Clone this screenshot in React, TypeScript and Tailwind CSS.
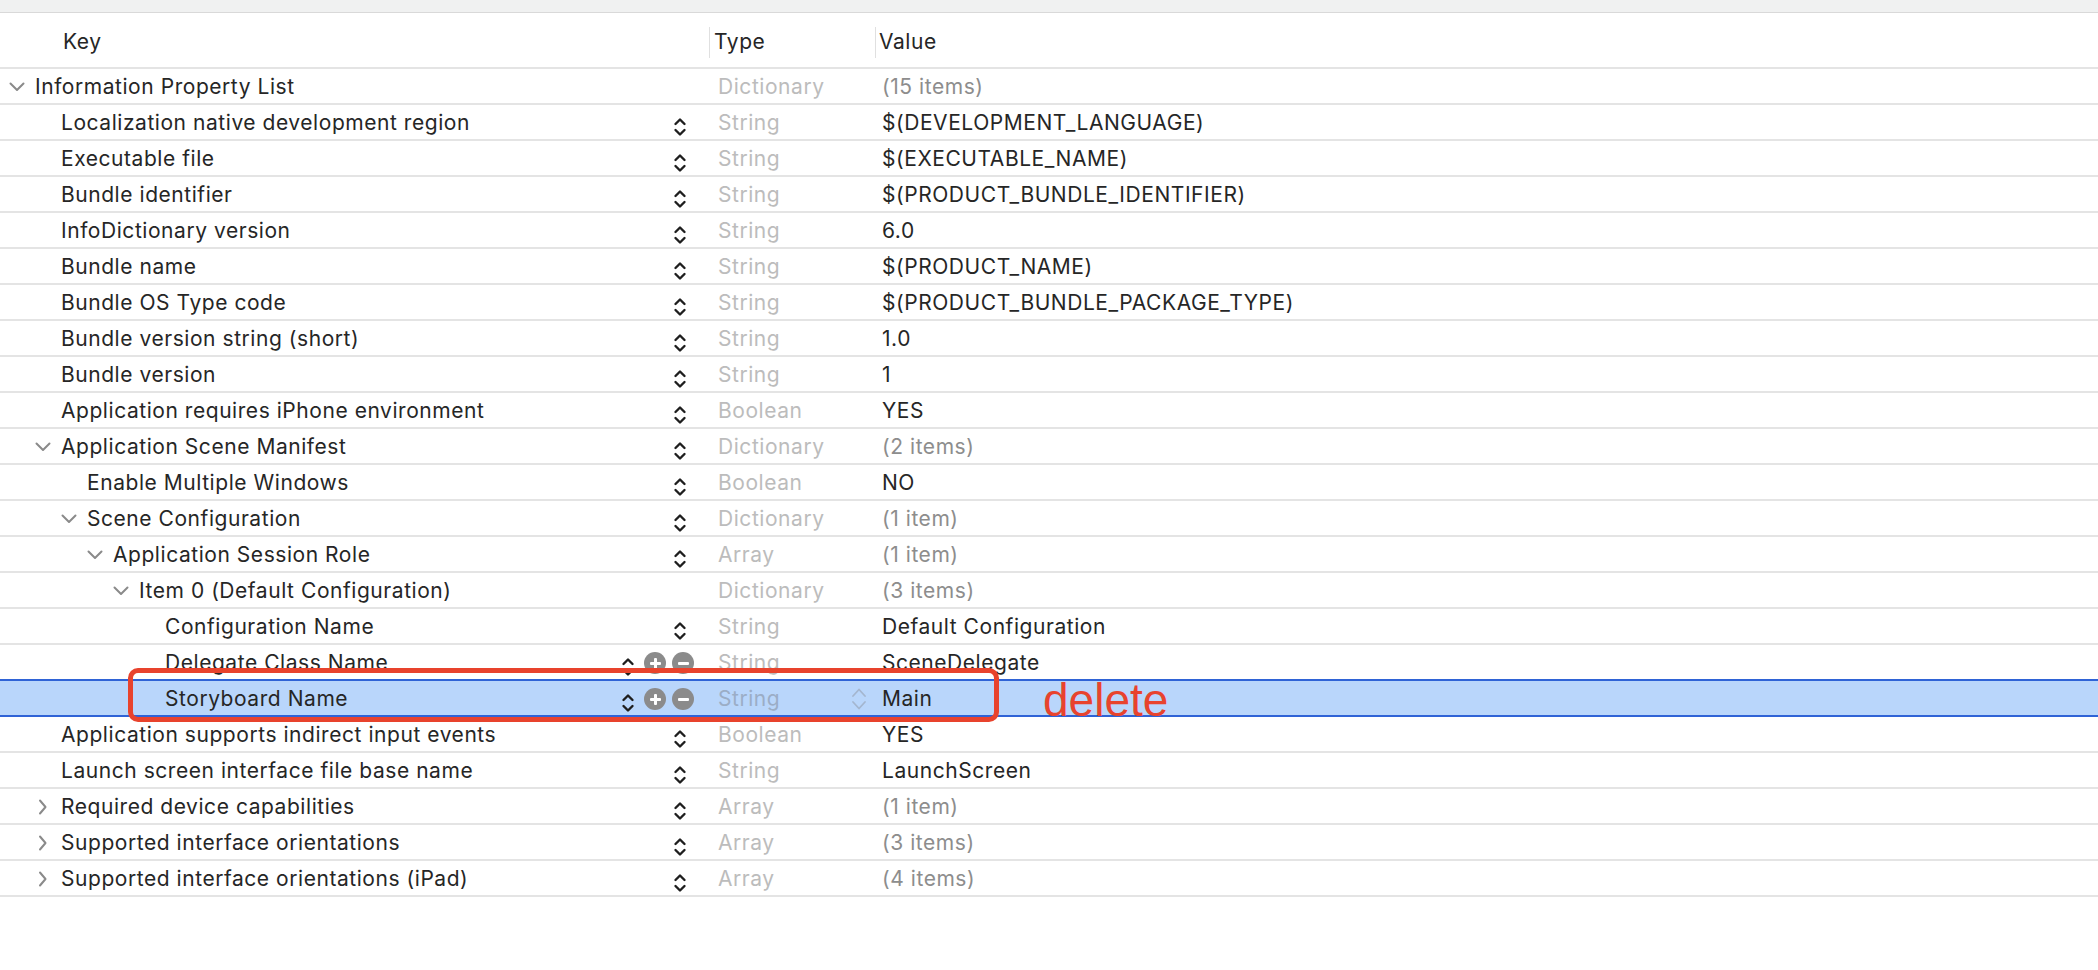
import React from "react";

type Row = {
  level: number;
  disc?: "down" | "right";
  k: string;
  type: string;
  value: string;
  dim?: boolean;
  stepper?: boolean;
  pm?: boolean;
  selected?: boolean;
  nextSelected?: boolean;
};

const rows: Row[] = [
  { level: 0, disc: "down", k: "Information Property List", type: "Dictionary", value: "(15 items)", dim: true },
  { level: 1, k: "Localization native development region", type: "String", value: "$(DEVELOPMENT_LANGUAGE)", stepper: true },
  { level: 1, k: "Executable file", type: "String", value: "$(EXECUTABLE_NAME)", stepper: true },
  { level: 1, k: "Bundle identifier", type: "String", value: "$(PRODUCT_BUNDLE_IDENTIFIER)", stepper: true },
  { level: 1, k: "InfoDictionary version", type: "String", value: "6.0", stepper: true },
  { level: 1, k: "Bundle name", type: "String", value: "$(PRODUCT_NAME)", stepper: true },
  { level: 1, k: "Bundle OS Type code", type: "String", value: "$(PRODUCT_BUNDLE_PACKAGE_TYPE)", stepper: true },
  { level: 1, k: "Bundle version string (short)", type: "String", value: "1.0", stepper: true },
  { level: 1, k: "Bundle version", type: "String", value: "1", stepper: true },
  { level: 1, k: "Application requires iPhone environment", type: "Boolean", value: "YES", stepper: true },
  { level: 1, disc: "down", k: "Application Scene Manifest", type: "Dictionary", value: "(2 items)", dim: true, stepper: true },
  { level: 2, k: "Enable Multiple Windows", type: "Boolean", value: "NO", stepper: true },
  { level: 2, disc: "down", k: "Scene Configuration", type: "Dictionary", value: "(1 item)", dim: true, stepper: true },
  { level: 3, disc: "down", k: "Application Session Role", type: "Array", value: "(1 item)", dim: true, stepper: true },
  { level: 4, disc: "down", k: "Item 0 (Default Configuration)", type: "Dictionary", value: "(3 items)", dim: true },
  { level: 5, k: "Configuration Name", type: "String", value: "Default Configuration", stepper: true },
  { level: 5, k: "Delegate Class Name", type: "String", value: "SceneDelegate", stepper: true, pm: true, nextSelected: true },
  { level: 5, k: "Storyboard Name", type: "String", value: "Main", stepper: true, pm: true, selected: true },
  { level: 1, k: "Application supports indirect input events", type: "Boolean", value: "YES", stepper: true },
  { level: 1, k: "Launch screen interface file base name", type: "String", value: "LaunchScreen", stepper: true },
  { level: 1, disc: "right", k: "Required device capabilities", type: "Array", value: "(1 item)", dim: true, stepper: true },
  { level: 1, disc: "right", k: "Supported interface orientations", type: "Array", value: "(3 items)", dim: true, stepper: true },
  { level: 1, disc: "right", k: "Supported interface orientations (iPad)", type: "Array", value: "(4 items)", dim: true, stepper: true },
];

const indent = ["pl-[9px]", "pl-[35px]", "pl-[61px]", "pl-[87px]", "pl-[113px]", "pl-[139px]"];

function Stepper() {
  return (
    <svg width="14" height="22" viewBox="0 0 14 22" className="translate-y-[4px]">
      <path d="M2.5 8 L7 3.5 L11.5 8" fill="none" stroke="#1e1e1e" strokeWidth="2.4" strokeLinecap="round" strokeLinejoin="round" />
      <path d="M2.5 14 L7 18.5 L11.5 14" fill="none" stroke="#1e1e1e" strokeWidth="2.4" strokeLinecap="round" strokeLinejoin="round" />
    </svg>
  );
}

function LightStepper() {
  return (
    <svg width="16" height="26" viewBox="0 0 16 26">
      <path d="M2 10 L8 3.5 L14 10" fill="none" stroke="#a4b6cf" strokeWidth="1.8" strokeLinecap="round" strokeLinejoin="round" />
      <path d="M2 16 L8 22.5 L14 16" fill="none" stroke="#a4b6cf" strokeWidth="1.8" strokeLinecap="round" strokeLinejoin="round" />
    </svg>
  );
}

function CircleBtn({ plus }: { plus?: boolean }) {
  return (
    <div className="relative flex h-[22px] w-[22px] items-center justify-center rounded-full bg-[#8b8b8b]">
      <div className="h-[3px] w-[11px] rounded-[1px] bg-white" />
      {plus && <div className="absolute h-[11px] w-[3px] rounded-[1px] bg-white" />}
    </div>
  );
}

function Disclosure({ dir }: { dir?: "down" | "right" }) {
  return (
    <div className="flex w-[26px] shrink-0 items-center">
      {dir === "down" && (
        <svg width="16" height="10" viewBox="0 0 16 10">
          <path d="M1.5 1.5 L8 8 L14.5 1.5" fill="none" stroke="#8a8a8a" strokeWidth="2" strokeLinecap="round" strokeLinejoin="round" />
        </svg>
      )}
      {dir === "right" && (
        <svg width="10" height="16" viewBox="0 0 10 16" className="ml-[3px]">
          <path d="M2 1.5 L7.5 8 L2 14.5" fill="none" stroke="#8a8a8a" strokeWidth="2" strokeLinecap="round" strokeLinejoin="round" />
        </svg>
      )}
    </div>
  );
}

function PlistRow({ r }: { r: Row }) {
  const border = r.selected || r.nextSelected ? "border-[#2f63d6]" : "border-[#e4e4e4]";
  const bg = r.selected ? "bg-[#b9d6fb]" : "bg-white";
  const typeColor = r.selected ? "text-[#9badc6]" : "text-[#bcbcbc]";
  const valueColor = r.dim ? "text-[#8d8d8d]" : "text-[#262626]";
  return (
    <div className={`flex h-[36px] border-b-2 pt-[2px] ${border} ${bg}`}>
      <div className={`flex w-[709px] shrink-0 items-center ${indent[r.level]} ${r.pm ? "pr-[15px]" : "pr-[22px]"}`}>
        <Disclosure dir={r.disc} />
        <span className="whitespace-nowrap text-[#262626]">{r.k}</span>
        <div className="ml-auto flex items-center">
          {r.stepper && <Stepper />}
          {r.pm && (
            <div className="ml-[9px] flex items-center gap-[6px]">
              <CircleBtn plus />
              <CircleBtn />
            </div>
          )}
        </div>
      </div>
      <div className={`flex w-[166px] shrink-0 items-center pl-[9px] pr-[8px] ${typeColor}`}>
        <span>{r.type}</span>
        {r.selected && (
          <div className="ml-auto">
            <LightStepper />
          </div>
        )}
      </div>
      <div className={`flex flex-1 items-center whitespace-nowrap pl-[7px] ${valueColor}`}>{r.value}</div>
    </div>
  );
}

export default function App() {
  return (
    <div className="relative h-[970px] w-full overflow-hidden bg-white text-[21px] tracking-[0.55px] [font-family:Inter,'Noto_Sans',sans-serif]">
      <div className="h-[13px] border-b border-[#d9d9d9] bg-[#f0f1f1]" />
      <div className="flex h-[56px] items-center border-b-2 border-[#e4e4e4] pt-[4px] text-[#262626]">
        <div className="w-[709px] shrink-0 pl-[63px]">Key</div>
        <div className="flex h-[31px] w-[166px] shrink-0 items-center border-l border-[#e0e0e0] pl-[4px]">Type</div>
        <div className="flex h-[31px] flex-1 items-center border-l border-[#e0e0e0] pl-[3px]">Value</div>
      </div>
      {rows.map((r, i) => (
        <PlistRow key={i} r={r} />
      ))}
      <div className="absolute left-[128px] top-[668px] h-[54px] w-[871px] rounded-[10px] border-[5px] border-[#e8432d]" />
      <div className="absolute left-[1043px] top-[677px] text-[46px] leading-none tracking-normal text-[#e8432d] [font-family:'Liberation_Sans',Arial,sans-serif]">
        delete
      </div>
    </div>
  );
}
